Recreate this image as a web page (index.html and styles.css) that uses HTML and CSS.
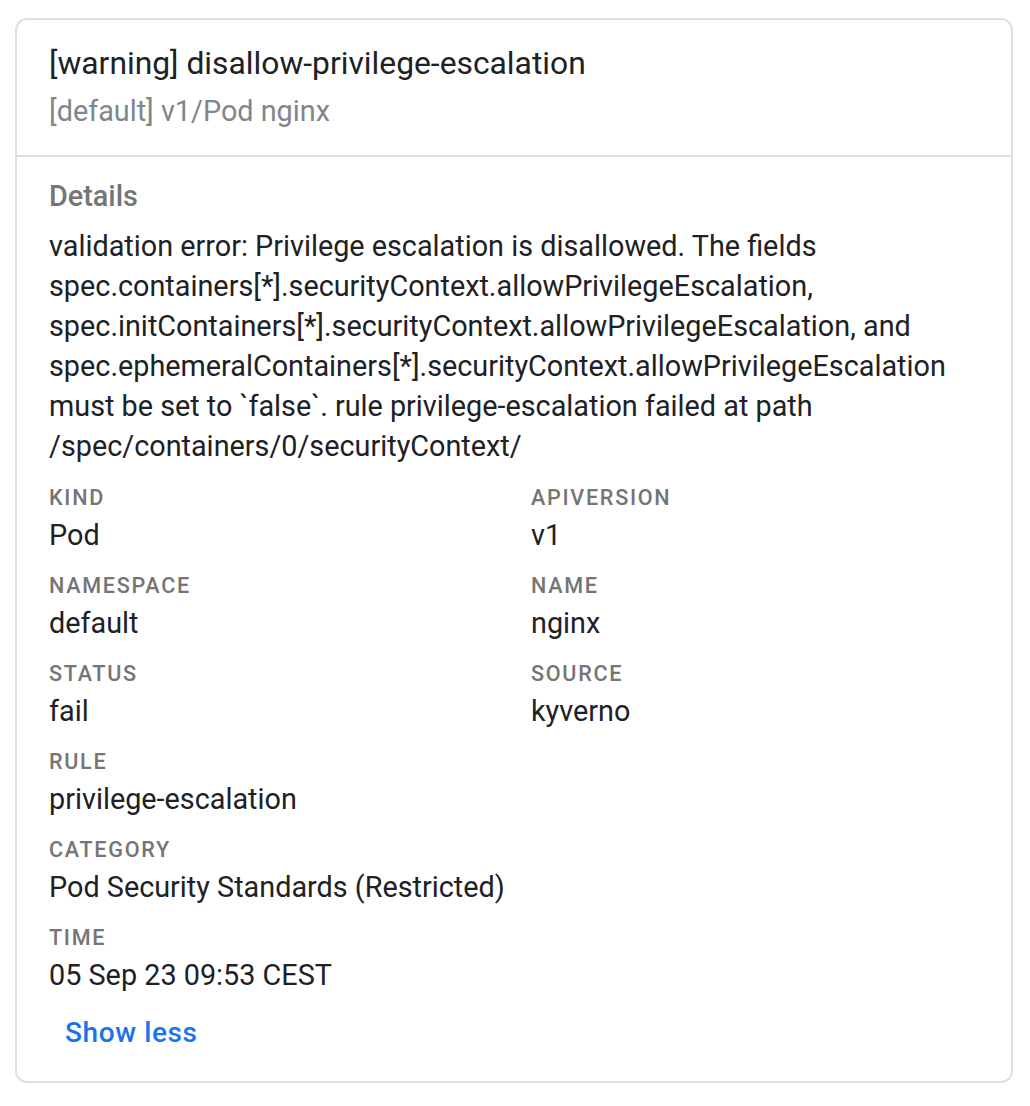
FILE: index.html
```html
<!DOCTYPE html>
<html>
<head>
<meta charset="utf-8">
<link rel="stylesheet" href="styles.css">
</head>
<body>
<div class="card">
  <div class="card-header">
    <div class="title">[warning] disallow-privilege-escalation</div>
    <div class="subtitle">[default] v1/Pod nginx</div>
  </div>
  <div class="card-body">
    <div class="section-title">Details</div>
    <p class="message">validation error: Privilege escalation is disallowed. The fields spec.containers[*].securityContext.allowPrivilegeEscalation, spec.initContainers[*].securityContext.allowPrivilegeEscalation, and spec.ephemeralContainers[*].securityContext.allowPrivilegeEscalation must be set to `false`. rule privilege-escalation failed at path /spec/containers/0/securityContext/</p>
    <div class="fields">
      <div class="field"><div class="label">Kind</div><div class="value">Pod</div></div>
      <div class="field"><div class="label">apiVersion</div><div class="value">v1</div></div>
      <div class="field"><div class="label">Namespace</div><div class="value">default</div></div>
      <div class="field"><div class="label">Name</div><div class="value">nginx</div></div>
      <div class="field"><div class="label">Status</div><div class="value">fail</div></div>
      <div class="field"><div class="label">Source</div><div class="value">kyverno</div></div>
      <div class="field col1"><div class="label">Rule</div><div class="value">privilege-escalation</div></div>
      <div class="field col1"><div class="label">Category</div><div class="value">Pod Security Standards (Restricted)</div></div>
      <div class="field col1"><div class="label">Time</div><div class="value">05 Sep 23 09:53 CEST</div></div>
    </div>
    <button class="show-less">Show less</button>
  </div>
</div>
</body>
</html>
```
FILE: styles.css
```css
* { box-sizing: border-box; }
html, body { margin: 0; padding: 0; background: #ffffff; }
body {
  font-family: Roboto, "Liberation Sans", Arial, sans-serif;
  color: #202124;
  padding: 18px 17px 0 15px;
}
.card {
  width: 998px;
  height: 1065px;
  border: 2px solid #dedfe2;
  border-radius: 12px;
  background: #fff;
  overflow: hidden;
}
.card-header {
  padding: 25px 32px 26px 32px;
  border-bottom: 2px solid #dedfe2;
}
.title {
  font-size: 31.8px;
  line-height: 36px;
  color: #202124;
}
.subtitle {
  margin-top: 12px;
  font-size: 28.8px;
  line-height: 36px;
  color: #80868b;
}
.card-body {
  padding: 21px 32px 0 32px;
}
.section-title {
  font-size: 28.8px;
  line-height: 36px;
  font-weight: 500;
  color: #757575;
}
.message {
  margin: 12px 0 0 0;
  font-size: 28.8px;
  line-height: 40px;
  color: #202124;
}
.fields {
  margin-top: 18px;
  display: grid;
  grid-template-columns: 482px 1fr;
  row-gap: 19px;
}
.col1 { grid-column: 1; }
.label {
  font-size: 21.6px;
  line-height: 28px;
  font-weight: 500;
  letter-spacing: 1.7px;
  text-transform: uppercase;
  color: #757575;
}
.value {
  margin-top: 5px;
  font-size: 28.8px;
  line-height: 36px;
  color: #202124;
}
.show-less {
  display: block;
  margin-top: 22px;
  padding: 0 16px;
  border: 0;
  background: transparent;
  font-family: Roboto, "Liberation Sans", Arial, sans-serif;
  font-size: 28px;
  line-height: 36px;
  font-weight: 500;
  letter-spacing: 0.6px;
  color: #1a73e8;
  cursor: pointer;
}
```
